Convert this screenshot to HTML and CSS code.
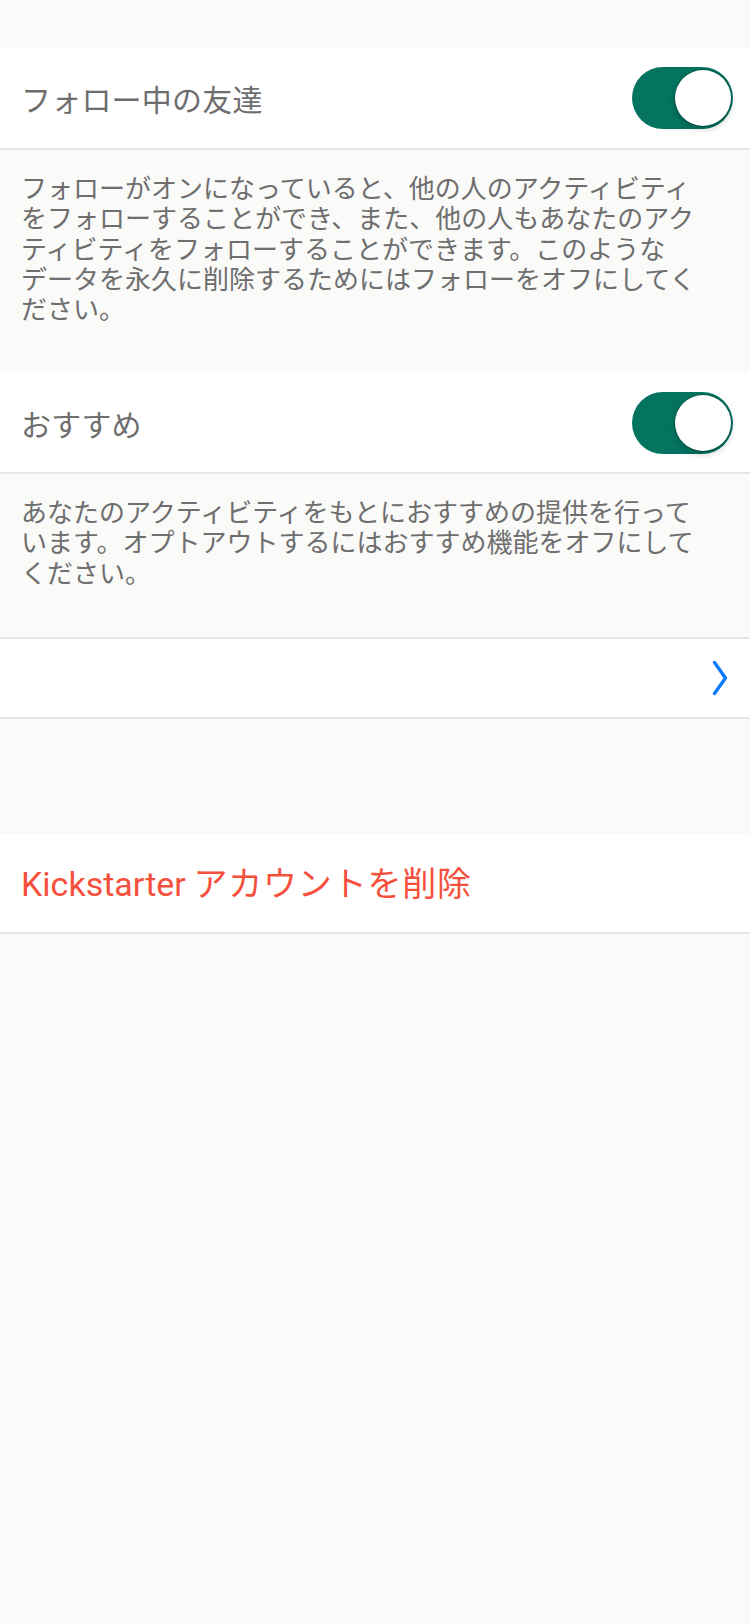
FILE: index.html
```html
<!DOCTYPE html>
<html lang="ja">
<head>
<meta charset="utf-8">
<title>設定</title>
<link rel="stylesheet" href="styles.css">
</head>
<body>
<div class="page">
  <div class="spacer-top"></div>

  <div class="row row-toggle">
    <span class="row-title">フォロー中の友達</span>
    <span class="switch"><span class="knob"></span></span>
  </div>
  <div class="desc desc-long">
    <span class="line">フォローがオンになっていると、他の人のアクティビティ</span>
    <span class="line">をフォローすることができ、また、他の人もあなたのアク</span>
    <span class="line">ティビティをフォローすることができます。このような</span>
    <span class="line">データを永久に削除するためにはフォローをオフにしてく</span>
    <span class="line">ださい。</span>
  </div>

  <div class="row row-toggle row-second">
    <span class="row-title">おすすめ</span>
    <span class="switch"><span class="knob"></span></span>
  </div>
  <div class="desc desc-short">
    <span class="line">あなたのアクティビティをもとにおすすめの提供を行って</span>
    <span class="line">います。オプトアウトするにはおすすめ機能をオフにして</span>
    <span class="line">ください。</span>
  </div>

  <div class="row row-link">
    <span class="row-title"></span>
    <svg class="chevron" width="16" height="36" viewBox="0 0 16 36" aria-hidden="true">
      <path d="M2.5 2.5 L13.5 18 L2.5 33.5" fill="none" stroke="#0a7aff" stroke-width="3.4" stroke-linecap="round" stroke-linejoin="round"/>
    </svg>
  </div>

  <div class="spacer-mid"></div>

  <div class="row row-danger">
    <span class="row-title danger"><span class="latin">Kickstarter</span> <span class="jp">アカウントを削除</span></span>
  </div>
</div>
</body>
</html>
```

FILE: styles.css
```css
html, body {
  margin: 0;
  padding: 0;
  background: #fafaf9;
}

body {
  font-family: "Noto Sans CJK JP", "Noto Sans", sans-serif;
  color: #6b6b6b;
  width: 750px;
  min-height: 1624px;
}

.page {
  display: flex;
  flex-direction: column;
}

.spacer-top {
  height: 48px;
}

.row {
  display: flex;
  align-items: center;
  justify-content: space-between;
  background: #ffffff;
  border-bottom: 2px solid #e6e6e6;
  padding: 0 17px 0 21px;
  box-sizing: border-box;
}

.row-toggle {
  height: 102px;
}

.row-second {
  height: 101px;
}

.row-link {
  height: 82px;
  border-top: 2px solid #e6e6e6;
  padding-right: 22px;
}

.row-danger {
  height: 100px;
}

.row-title {
  font-size: 30px;
  line-height: 40px;
  letter-spacing: 0.2px;
  color: #6e6e6e;
}

.row-title.danger {
  color: #f5503c;
  font-size: 34px;
  letter-spacing: 0;
  line-height: 44px;
}

.latin {
  font-family: "Roboto", "Noto Sans", sans-serif;
}

.jp {
  letter-spacing: 0.8px;
}

.switch {
  position: relative;
  width: 101px;
  height: 62px;
  border-radius: 31px;
  background: #047461;
  flex: none;
}

.knob {
  position: absolute;
  right: 2px;
  top: 3px;
  width: 56px;
  height: 56px;
  border-radius: 50%;
  background: #ffffff;
  box-shadow: 0 3px 7px rgba(0, 0, 0, 0.22), 0 0 0 1px rgba(0, 60, 50, 0.35);
}

.desc {
  display: flex;
  flex-direction: column;
  font-size: 26px;
  color: #6e6e6e;
  padding: 22px 10px 0 21px;
  white-space: nowrap;
  box-sizing: border-box;
}

.line {
  display: block;
  height: 30.3px;
  line-height: 30.3px;
}

.desc-long {
  height: 223px;
}

.desc-short {
  height: 163px;
}

.chevron {
  display: block;
}

.spacer-mid {
  height: 115px;
}
```
